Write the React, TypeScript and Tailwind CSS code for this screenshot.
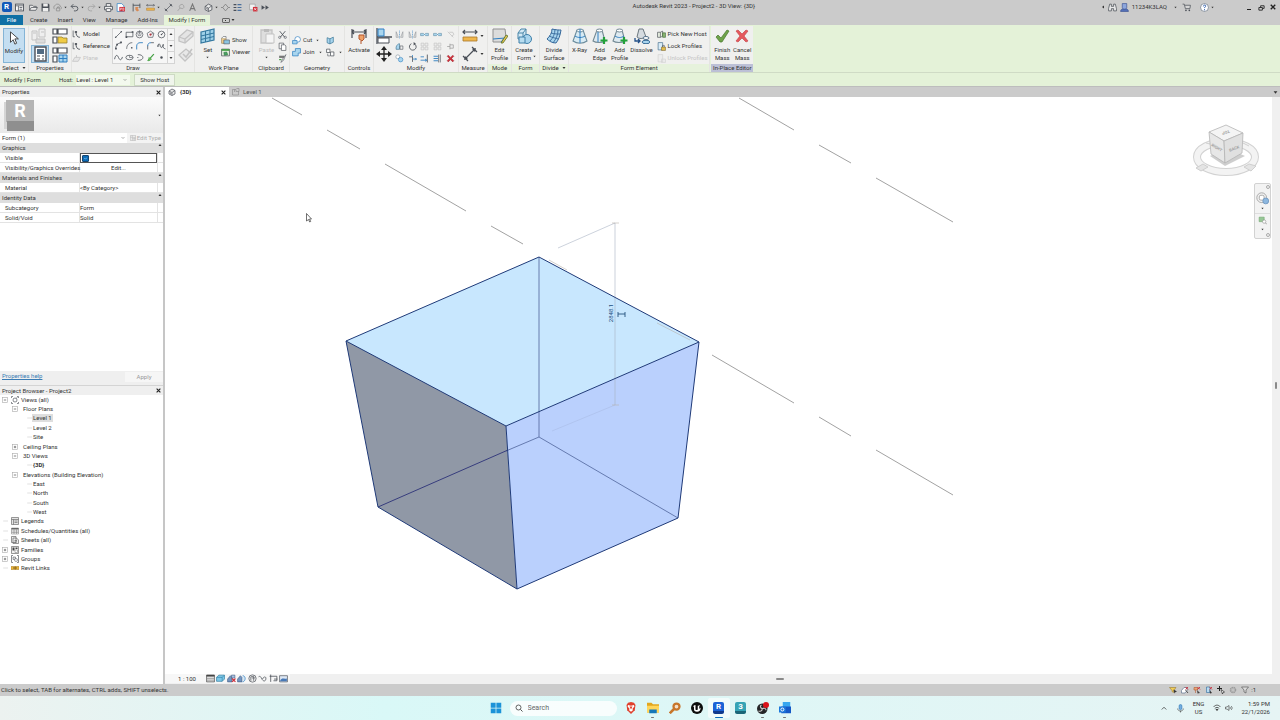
import type { ReactNode } from 'react';
import clsx from 'clsx';

const K = '#4a4f57';
const B = '#2f7fc1';
const L = '#a9d5ee';
const G = '#3f9c3f';
const R = '#cf2f3a';
const S = '#c3c3c3';

const glyphs: Record<string, ReactNode> = {
  palette: <><rect x="1" y="2" width="14" height="12" fill="#fff" stroke={K} strokeWidth="1.6" /><path d="M1 5h14M6 5v9M8 8h5M8 11h5" stroke={K} strokeWidth="1.4" /></>,
  open: <path d="M1 13V4h5l2 2h5v2M1 13l3-5h11l-3 5z" fill="#ececec" stroke={K} strokeWidth="1.3" />,
  save: <><path d="M1 1h12l2 2v12H1z" fill={K} /><path d="M4 1h8v5H4zM3 9h10v6H3z" fill="#eee" /></>,
  sync: <path d="M3 11a4 4 0 0 1 1-7 5 5 0 0 1 9 2 3 3 0 0 1 1 5M6 9h6v5H6zM8 9V7h3v2" fill="none" stroke="#8a8a8a" strokeWidth="1.3" />,
  undo: <path d="M6 2 2 6l4 4M2 6h8a4 4 0 0 1 0 8H7" fill="none" stroke={K} strokeWidth="1.5" />,
  redo: <path d="m10 2 4 4-4 4M14 6H6a4 4 0 0 0 0 8h3" fill="none" stroke="#a3a3a3" strokeWidth="1.5" />,
  print: <><path d="M4 6V1h8v5M4 12H1V6h14v6h-3" fill="#eee" stroke={K} strokeWidth="1.5" /><path d="M4 10h8v5H4z" fill="#fff" stroke={K} strokeWidth="1.4" /></>,
  pdf: <><path d="M2 1h8l4 4v10H2z" fill="#fff" stroke={B} strokeWidth="1.3" /><path d="M6 7h10v8H6z" fill={R} /><path d="M8 13V9h2v2H8M12 9v4h2V9z" stroke="#fff" strokeWidth=".8" fill="none" /></>,
  gauge: <><path d="M2 1v14M14 1v8M2 4h12" stroke={K} strokeWidth="1.5" fill="none" /><path d="M6 7h6l-2 3 3 3-4 2-3-3z" fill="#d98a55" /></>,
  ruler: <><path d="M1 4h14M3 2 1 4l2 2M13 2l2 2-2 2" fill="none" stroke={K} strokeWidth="1.2" /><path d="M1 9h14v4H1z" fill="#efb64c" stroke="#a9772a" strokeWidth=".8" /></>,
  dimension: <><path d="M3 13 13 3M1 10l5 5M10 1l5 5" stroke={K} strokeWidth="1.2" /><path d="m2 14 1-4 3 3zM14 2l-1 4-3-3z" fill={K} /></>,
  tag: <path d="M3 14 7 9M7 9a4 4 0 1 1 5 1l-5-1" fill="none" stroke="#9a9a9a" strokeWidth="1.3" />,
  letter: <path d="M3 14 8 2l5 12M5 10h6" fill="none" stroke="#777" strokeWidth="2" />,
  house: <><path d="M2 6 8 2l6 3v7l-6 3-6-3z" fill="#e8e8e8" stroke={K} strokeWidth="1.4" /><path d="m2 6 6 3 6-4M8 9v6M4 10h2v2" fill="none" stroke={K} strokeWidth="1.2" /></>,
  section: <path d="m8 2 5 6-5 6-5-6zM0 8h3M13 8h3" fill="none" stroke="#777" strokeWidth="1.3" />,
  thin: <><path d="M1 3h5M1 8h5M1 13h5" stroke={K} strokeWidth="2.2" /><path d="M8 3h7M8 8h7M8 13h7" stroke="#4a6f9c" strokeWidth="2.2" /></>,
  closewin: <><path d="M1 2h10v10H1z" fill="#f2f2f2" stroke="#999" strokeWidth="1.2" /><path d="M7 7h8v8H7z" fill={R} /><path d="m9 9 4 4M13 9l-4 4" stroke="#fff" strokeWidth="1.2" /></>,
  more: <path d="M1 4v8l6-4zM8 4v8l6-4z" fill={K} />,
  cursor: <path d="M4 1v12l3-3 2 5 2-1-2-5h4z" fill="#fff" stroke="#333" strokeWidth="1" />,
  typeProps: <><path d="M1 3h5v9H1zM8 1h6v8H8z" fill="#eee" stroke={S} /><path d="M2 5h3M10 4h3M5 11h9v4H5z" stroke={S} fill="#ddd" /></>,
  family: <><path d="M1 1h4v5H1zM6 1h9v5H6zM1 9h4v6H1z" fill="#fff" stroke={K} strokeWidth="1.2" /><path d="M6 9h4l1 1h4v5H6z" fill="#f0cb45" stroke="#97812f" strokeWidth=".8" /></>,
  propSheet: <><path d="M3 1h11v14H3z" fill="#fff" stroke={K} strokeWidth="1.4" /><path d="M5 3h7v5H5z" fill="#526b83" /><path d="M5 10h3M10 10h2M5 13h3M10 13h2" stroke={K} strokeWidth="1.2" /></>,
  familyTypes: <><path d="M1 1h4v5H1zM6 1h9v5H6zM1 9h4v6H1z" fill="#fff" stroke={K} strokeWidth="1.2" /><path d="M7 8h8v7H7z" fill={L} stroke={B} /><path d="M7 11.500h8M11 8v7" stroke={B} /></>,
  modelLine: <><path d="M2 1v11M2 12h3" fill="none" stroke={K} strokeWidth="1.3" /><path d="M7 3c0 6 2 10 7 10" fill="none" stroke={K} strokeWidth="1.6" /><path d="M5 2h4v3H5z" fill={K} /></>,
  plane: <path d="m1 13 4-7h10l-4 7zM8 6V2" fill="#e6e6e6" stroke={S} strokeWidth="1.4" />,
  line: <><path d="M3 13 13 3" stroke={K} strokeWidth="1.3" /><circle cx="3" cy="13" r="1.400" fill={K} /><circle cx="13" cy="3" r="1.400" fill={K} /></>,
  rect: <><path d="M2 4h12v8H2z" fill="none" stroke={K} strokeWidth="1.3" /><path d="M1 11h3v3H1zM12 2h3v3h-3z" fill={K} /></>,
  polyIn: <><circle cx="8" cy="8" r="6" fill="none" stroke={K} strokeWidth="1.2" /><path d="M8 8V1M5 6l3-3 3 3-1 4H6z" fill="none" stroke={K} /></>,
  polyOut: <><path d="m8 2 6 4-2 7H4L2 6z" fill="none" stroke={K} strokeWidth="1.2" /><circle cx="8" cy="8" r="2" fill={R} /><path d="m8 8 5-2" stroke={K} /></>,
  circle: <><circle cx="8" cy="8" r="6" fill="none" stroke={K} strokeWidth="1.3" /><path d="m8 8 4-4" stroke={K} strokeWidth="1.2" /><circle cx="8" cy="8" r="1.400" fill={K} /></>,
  arc: <><path d="M3 14C3 8 6 4 13 3" fill="none" stroke={K} strokeWidth="1.4" /><path d="M2 12h3v3H2zM11 1h3v3h-3zM4 5h3v3H4z" fill={K} /></>,
  arcCenter: <><path d="M3 14C3 7 7 3 13 3" fill="none" stroke={K} strokeWidth="1.3" /><circle cx="12" cy="12" r="1.500" fill={K} /></>,
  arcTan: <path d="M3 15V9c0-4 3-6 6-6h5" fill="none" stroke={B} strokeWidth="1.600" />,
  fillet: <><path d="M3 15V8" stroke={K} strokeWidth="1.4" /><path d="M3 9c0-4 2-6 6-6" fill="none" stroke={B} strokeWidth="1.600" /><path d="M9 3h5" stroke={K} strokeWidth="1.4" /></>,
  spline: <path d="M1 10c3-10 4-3 6 1s5-9 4-4 1 6 4 7M1 9h3" fill="none" stroke={K} strokeWidth="1.500" />,
  wave: <path d="M1 11C3 2 6 3 8 8s5 6 7-1" fill="none" stroke={K} strokeWidth="1.500" />,
  ellipse: <><ellipse cx="8" cy="8" rx="6.500" ry="4" fill="none" stroke={K} strokeWidth="1.3" /><path d="M8 4v4h6" fill="none" stroke={K} /></>,
  halfEllipse: <path d="M5 3c12-1 12 11 0 10M4 8h2" fill="none" stroke={K} strokeWidth="1.4" />,
  pick: <><path d="M3 14 14 2" stroke={G} strokeWidth="2" /><path d="M5 8v6l5-3z" fill="#7acb5d" stroke={G} /></>,
  point: <circle cx="8" cy="8" r="2.200" fill={K} />,
  drawFace: <><path d="m1 9 8-7 6 2v4l-8 7-6-2z" fill="#e4e4e4" stroke={S} strokeWidth="1.3" /><path d="m1 9 6 2 8-7M7 11v4" fill="none" stroke={S} strokeWidth="1.3" /></>,
  drawPlane: <><path d="m1 9 7-6 6 5-7 7z" fill="#e8e8e8" stroke={S} strokeWidth="1.3" /><path d="m5 8 3 3 6-8" fill="none" stroke={S} strokeWidth="1.600" /></>,
  workPlane: <><path d="m1 4 13-3v11L1 15z" fill="#9fd0e8" stroke="#33779f" strokeWidth="1.2" /><path d="M5.500 3v11M10 2v11M1 8l13-3M1 11.500 14 8.500" stroke="#33779f" /></>,
  show: <><path d="M1 4h8v9H1z" fill="#f3cf8c" stroke="#8b744a" /><path d="M5 7h10v7H5z" fill="#8cc4e0" stroke={K} /><path d="M1 4 4 1h5L9 4" fill="#fff" stroke={K} /></>,
  viewer: <><path d="M1 2h14v12H1z" fill="#e5f2df" stroke={K} strokeWidth="1.3" /><path d="M1 2h14v3H1z" fill={G} /><path d="m5 8 5-1 2 5-6 1z" fill="#4aa563" stroke="#286b3d" /></>,
  paste: <><path d="M2 2h11v13H2z" fill="#dedede" stroke={S} strokeWidth="1.3" /><path d="M5 1h5v3H5z" fill="#bbb" /><path d="M7 6h8v9H7z" fill="#f5f5f5" stroke={S} /></>,
  cutClip: <><path d="m3 2 9 11M13 2 4 13" stroke={K} strokeWidth="1.500" /><circle cx="3" cy="13" r="2" fill="none" stroke={K} /><circle cx="13" cy="13" r="2" fill="none" stroke={K} /></>,
  copyClip: <><path d="M2 2h8v10H2z" fill="#fff" stroke={K} strokeWidth="1.2" /><path d="M6 5h6l2 2v8H6z" fill="#fff" stroke={K} strokeWidth="1.2" /></>,
  match: <><path d="M2 3h9v4H2z" fill="#777" /><path d="M14 1 8 9l-3 6 5-4z" fill="#e8e8e8" stroke={K} /><path d="M2 10h4" stroke={G} strokeWidth="2" /></>,
  cutGeom: <><circle cx="10" cy="6" r="5" fill="#fff" stroke={B} strokeWidth="1.2" /><path d="M1 8h8v6H1z" fill={L} stroke={B} strokeWidth="1.2" /></>,
  joinGeom: <path d="M6 1h9v8h-4v5H1V6h5z" fill={L} stroke={B} strokeWidth="1.3" />,
  cope: <path d="m2 3 5 2 6-3v9l-6 3-5-2zM7 5v9" fill={L} stroke="#3d7797" strokeWidth="1.3" />,
  wallJoin: <><path d="M1 2h6v6H1zM8 7h6v7H8z" fill="#fff" stroke={K} strokeWidth="1.3" /><path d="M3 10v4h4" fill="none" stroke={K} /></>,
  activate: <><path d="M1 1v9M15 1v9M1 4h14M3 2 1 4l2 2M13 2l2 2-2 2" stroke={K} strokeWidth="1.2" fill="none" /><path d="M8 7h5v4l-2 2-3-2zM10 13v3" fill="#f0a36a" stroke="#b4572c" /></>,
  align: <><path d="M1 0v16M1 9h15" stroke={K} strokeWidth="1.3" /><path d="M2 1h6v7H2z" fill={L} stroke={B} /><path d="M2 10h11v5H2z" fill="#fff" stroke={K} /></>,
  move: <><path d="M8 2v12M2 8h12" stroke="#222" strokeWidth="1.300" /><path d="m8 0 3 4H5zM8 16l3-4H5zM0 8l4-3v6zM16 8l-4-3v6z" fill="#222" /></>,
  mirror: <><path d="M8 1v14" stroke={B} strokeDasharray="2 1" /><path d="M2 13V3l4 10zM14 13V3l-4 10z" fill="#e8e8e8" stroke="#8b8f94" /></>,
  split: <path d="M1 6h5l2 2-2 2H1zM15 6h-5L8 8l2 2h5z" fill={L} stroke="#5b87a3" />,
  unpin: <path d="m3 3 10 10M6 4h6l2 4-4 3" fill="none" stroke={S} strokeWidth="1.4" />,
  offset: <><path d="M2 13V9c2-6 6-6 6-6v10z" fill={L} stroke="#4d7f9c" strokeWidth="1.3" /><path d="M9 7h5v6H9z" fill="#eee" stroke={K} /></>,
  rotate: <><path d="M6 3a6 6 0 1 0 5 0" fill="none" stroke={K} strokeWidth="1.500" /><path d="M10 0v6l4-3z" fill={K} /></>,
  array: <path d="M2 2h5v5H2zM9 2h5v5H9zM2 9h5v5H2zM9 9h5v5H9z" fill="#ececec" stroke={S} strokeWidth="1.2" />,
  pin: <path d="M2 8h5M7 3v10M7 5h6v6H7" fill="#eee" stroke="#9b9b9b" strokeWidth="1.3" />,
  copyEl: <><circle cx="5" cy="5" r="3.500" fill="#fff" stroke="#7b8a95" /><circle cx="10" cy="10" r="4" fill={L} stroke={B} /></>,
  trim: <><path d="M2 5h6v9" fill="none" stroke={K} strokeWidth="1.400" /><path d="M8 2v3M9 9h6m-2-2 2 2-2 2" fill="none" stroke={B} strokeWidth="1.500" /></>,
  extend: <><path d="M13 1v14" stroke={K} strokeWidth="1.500" /><path d="M1 5h6M1 11h11m-3-2 3 2-3 2" fill="none" stroke={B} strokeWidth="1.500" /></>,
  extendMany: <><path d="M13 1v14M10 1v14" stroke={K} strokeWidth="1.200" /><path d="M1 4h8M1 8h8M1 12h8" stroke={B} strokeWidth="1.600" /></>,
  del: <path d="m2 4 2-2 4 4 4-4 2 2-4 4 4 4-2 2-4-4-4 4-2-2 4-4z" fill={R} stroke="#8f1d27" strokeWidth=".7" />,
  editProfile: <><path d="M1 1h12l1 8-4 5H1z" fill="#dcdcdc" stroke="#909090" /><path d="m1 11 12-1M9 14l5-6" stroke={B} /><path d="m9 15 5-8 2 1-5 7z" fill="#e9c44f" stroke="#55702a" strokeWidth=".8" /></>,
  createForm: <><path d="M2 5 5 1h5v7l-3 3H2z" fill="#d3e9f5" stroke="#4a86a8" /><path d="M2 5h5l3-4M7 5v6" fill="none" stroke="#4a86a8" /><circle cx="11" cy="11" r="4.500" fill={L} stroke="#3e7fa8" /><path d="M3 9h6v6H3z" fill="#b7ddf0" stroke="#3e7fa8" /></>,
  divide: <><path d="M6 1c4 1 7 1 9 1-1 6-2 9-5 13-4 0-7-2-9-4 3-3 5-6 5-10z" fill={L} stroke="#36689a" /><path d="M5 5c4 1 6 1 9 1M3 8c4 2 7 2 9 3M9 1c0 5-2 9-5 12M12 2c0 5-2 9-5 13" fill="none" stroke="#36689a" strokeWidth=".9" /></>,
  xray: <><path d="M5 2h6l4 11c-4 3-10 3-14 0z" fill="#d9ebf3" stroke="#6d8d9d" strokeWidth="1.1" /><ellipse cx="8" cy="2.500" rx="3" ry="1.500" fill="#fff" stroke="#6d8d9d" /><path d="M8 1v14M3 8c3 2 7 2 10 0" fill="none" stroke={B} /></>,
  addEdge: <><path d="M5 2h5l3 11c-3 2-9 2-12 0z" fill="#dfeaf0" stroke="#738994" strokeWidth="1.1" /><ellipse cx="7.500" cy="2.500" rx="3" ry="1.500" fill="#fff" stroke="#738994" /><path d="M6 4v10" stroke={B} /><path d="M12 9v7M8.500 12.500h7" stroke="#22a03a" strokeWidth="2.200" /></>,
  addProfile: <><path d="M5 2h5l3 11c-3 2-9 2-12 0z" fill="#dfeaf0" stroke="#738994" strokeWidth="1.1" /><ellipse cx="7.500" cy="2.500" rx="3" ry="1.500" fill="#fff" stroke="#738994" /><path d="M3 8c3 2 6 2 9 0" fill="none" stroke={B} /><path d="M12 9v7M8.500 12.500h7" stroke="#22a03a" strokeWidth="2.200" /></>,
  dissolve: <><path d="M5 1h4l3 8c-3 2-7 2-9 0z" fill="#d5dbe0" stroke="#6c7880" /><ellipse cx="12" cy="10" rx="3" ry="1.500" fill="#fff" stroke="#56728c" /><ellipse cx="12" cy="14" rx="4" ry="1.700" fill={L} stroke="#3a6e99" /><path d="M1 10v3h5m-2-2 2 2-2 2" fill="none" stroke="#234f87" strokeWidth="1.300" /></>,
  pickHost: <><path d="M1 4h5v9H1zM6 4l4-2v9l-4 2" fill="#e8f0e2" stroke={K} strokeWidth="1.2" /><path d="M10 5h5v8h-5z" fill="#8cb873" stroke="#355c2c" /></>,
  lock: <><path d="M2 1h8v13H2z" fill="#d9ecf7" stroke="#48708e" strokeWidth="1.2" /><path d="M8 9h7v6H8z" fill="#e5be4c" stroke="#7c6429" /><path d="M10 9V6h3v3" fill="none" stroke={K} /></>,
  unlock: <path d="M2 1h8v13H2zM8 9h7v6H8z" fill="#ededed" stroke="#d3d3d3" strokeWidth="1.2" />,
  finish: <path d="m2 9 2-2 3 3 6-8 2 1-7 11H6z" fill="#6fa34a" stroke="#48752e" strokeWidth=".7" />,
  cancel: <path d="m2 3 2-1 4 4 4-4 2 1-4 5 4 5-2 1-4-4-4 4-2-1 4-5z" fill="#e5585d" stroke="#c94a50" strokeWidth=".7" />,
  binoc: <path d="M3 2h3v4h4V2h3l2 8v4h-5v-4H6v4H1v-4z" fill="#e8e8e8" stroke={K} strokeWidth="1.3" />,
  user: <><path d="M1 15c0-4 3-5 7-5s7 1 7 5z" fill="#5672b9" stroke="#2b4387" /><path d="M4 1h8v7l-2 3H6L4 8z" fill="#8da6dc" stroke="#2b4387" /></>,
  cart: <><path d="M1 2h3l2 8h8l1-6H5" fill="#d6d6d6" stroke={K} strokeWidth="1.3" /><circle cx="7" cy="13" r="1.500" fill={K} /><circle cx="13" cy="13" r="1.500" fill={K} /></>,
  help: <><circle cx="8" cy="8" r="7" fill="#fff" stroke="#4b596d" /><path d="M6 6c0-3 5-3 4 0 0 1-2 1-2 3M8 11v2" fill="none" stroke="#2456a8" strokeWidth="1.700" /></>,
  plan: <path d="M1 3h7v4h6V1H9M1 3v11h12V7M5 3v5" fill="none" stroke="#8c8c8c" strokeWidth="1.300" />,
  editType: <path d="M1 1h14v14H1zM1 6h14M6 1v14M6 10h9M11 6v9" fill="none" stroke="#b3b3b3" strokeWidth="1.500" />,
  views: <><path d="M4 1H1v3M12 1h3v3M4 15H1v-3M12 15h3v-3" fill="none" stroke={K} strokeWidth="1.3" /><circle cx="8" cy="8" r="4" fill="none" stroke={K} strokeWidth="1.3" /><path d="m10 5 3-3" stroke={K} /></>,
  legend: <path d="M1 1h14v14H1zM1 5h14M5 5v10M7 8h6M7 11h6" fill="#e4e4e4" stroke="#666" strokeWidth="1.3" />,
  schedule: <><path d="M1 2h14v12H1zM1 8h14M1 11h14M6 5v9M11 5v9" fill="#fafafa" stroke="#777" /><path d="M1 3.500h14" stroke="#666" strokeWidth="3" /></>,
  sheet: <path d="M1 1h9v12H1zM4 4h7l4 4v7H4zM7 9h5M7 12h5" fill="#eee" stroke="#555" strokeWidth="1.2" />,
  families: <><path d="M1 1h14v14H1z" fill="#f0f0f0" stroke="#555" strokeWidth="1.2" /><path d="M3 3h4v6H3zM9 3h4v3H9z" fill="#444" /><path d="M8 8h5v5H8z" fill="#fff" stroke="#777" /></>,
  groups: <><path d="M4 1H1v14h3M12 1h3v14h-3" fill="none" stroke={K} strokeWidth="1.3" /><path d="M4 4h5v5H4z" fill="#ddd" stroke={K} /><circle cx="10" cy="10" r="3" fill="#fff" stroke={K} /></>,
  link: <><path d="M0 5h9v6H0zM8 5h8v6H8z" fill="#eab73d" stroke="#a4761e" /><path d="M4 8h8" stroke="#6a4b10" strokeWidth="1.600" /></>,
  detail: <><path d="M1 2h14v12H1z" fill="#ddd" stroke="#444" strokeWidth="1.2" /><path d="M1 3h14" stroke="#444" strokeWidth="3" /><path d="M1 8h14M1 11h14" stroke="#888" /></>,
  style: <><path d="M1 6 5 2h10v7l-4 4H1z" fill="#7fc8e8" stroke="#277aa0" strokeWidth="1.2" /><path d="M1 6h10l4-4M11 6v7" fill="none" stroke="#277aa0" /></>,
  sun: <><path d="M1 9 6 3l3 3v8H1z" fill="#7596c0" stroke="#38547c" /><path d="M8 2h6v5H8z" fill="#a9c1e0" stroke="#38547c" /><path d="m9 8 6 6M15 8l-6 6" stroke={R} strokeWidth="2" /></>,
  shadow: <><path d="M1 9 6 3l3 3v8H1z" fill="#7596c0" stroke="#38547c" /><path d="M10 3c6 0 6 10 0 11" fill="#d8e8f5" stroke={B} strokeWidth="1.300" /></>,
  crop: <><circle cx="8" cy="8" r="6.500" fill="#eee" stroke={K} strokeWidth="1.2" /><path d="M5 12V5l5-1v8M7 7h6" fill="none" stroke={K} strokeWidth="1.200" /></>,
  glasses: <path d="M1 5c3-2 4 0 6 4s6 5 7 0-4-5-6 0" fill="none" stroke={K} strokeWidth="1.300" />,
  reveal: <path d="M3 1v13M1 4h13v8M9 9h6M8 12h6" fill="none" stroke={K} strokeWidth="1.400" />,
  analytic: <><path d="M1 3h14v11H1z" fill="#dfe9f5" stroke={K} strokeWidth="1.2" /><path d="M2 12c4-7 6-2 12-4v5H2z" fill="#4879b7" /></>,
  wrench: <><path d="M1 3h13l-5 7v3l-3-2v-2z" fill="#f1cd58" stroke="#8d6d1c" /><path d="m9 7 2 8 2-3 3-1z" fill="#333" /></>,
  selLink: <><path d="M1 9 6 3h6v6l-4 5H1z" fill="#fff" stroke="#4d6484" strokeWidth="1.2" /><path d="m9 2 5 5M14 2 9 7" stroke={R} strokeWidth="1.800" /><path d="m9 8 5 6" stroke="#333" strokeWidth="1.600" /></>,
  selPin: <><path d="M2 3h7v5H2zM5 8v6" fill="#e8a67a" stroke="#b35a30" strokeWidth="1.200" /><path d="m9 2 5 5M14 2 9 7" stroke={R} strokeWidth="1.800" /><path d="m8 8 6 6-5 1z" fill="#444" /></>,
  selFace: <><path d="M3 2h7v11H3z" fill="#b9dcf1" stroke="#2a68a0" strokeWidth="1.2" /><path d="m9 2 5 5M14 2 9 7" stroke={R} strokeWidth="1.800" /><path d="m9 8 5 6-4 1z" fill="#333" /></>,
  drag: <><path d="M5 0v10M0 5h10" stroke="#222" strokeWidth="2" /><path d="m8 7 7 5-3 1-1 3z" fill="#fff" stroke="#222" strokeWidth="1.300" /></>,
  gear: <circle cx="8" cy="8" r="5" fill="#c2c2c2" stroke="#9b9b9b" strokeWidth="3" strokeDasharray="3 1" />,
  funnel: <path d="M1 2h14l-5 6v6l-4-2V8z" fill="#ddd" stroke="#555" strokeWidth="1.300" />,
  wheel: <><circle cx="7" cy="7" r="6" fill="#f3f3f3" stroke="#9a9a9a" /><rect x="4" y="4" width="6" height="6" rx="2" fill="#fff" stroke="#999" /><circle cx="12" cy="11" r="3.600" fill="#8db7df" stroke="#6c94bd" /></>,
  zoomRegion: <><path d="M2 2h9v8H2z" fill="#97c796" stroke="#6ea46d" /><circle cx="11" cy="10" r="3" fill="#fff" stroke="#8d8d8d" /><path d="m13 12 3 3" stroke="#8d8d8d" strokeWidth="1.400" /></>,
  windows: <path d="M1 1h6.500v6.500H1zM8.500 1H15v6.500H8.500zM1 8.500h6.500V15H1zM8.500 8.500H15V15H8.500z" fill="#1c93d8" />,
  search: <><circle cx="7" cy="7" r="5" fill="none" stroke="#333" strokeWidth="1.500" /><path d="m11 11 4 4" stroke="#333" strokeWidth="1.700" /></>,
  brave: <><path d="m4 1 4-1 4 1 2 3-1 7-5 5-5-5-1-7z" fill="#e0402d" /><path d="m4 4 4 1 4-1 .5 2L10 9l.5 2L8 13l-2.500-2L6 9 3.500 6z" fill="#fff" /><path d="m6 6 2 4 2-4z" fill="#e0402d" /></>,
  folder: <><path d="M0 1h6l2 2h8v11H0z" fill="#e2a61f" /><path d="M0 5h16v9H0z" fill="#ffd65b" /><path d="M3 10h10v5H3z" fill="#1577b8" /></>,
  finder: <><circle cx="10" cy="6" r="4" fill="#f4dfc8" stroke="#c8762b" strokeWidth="3" /><path d="m7 9-6 6" stroke="#c8762b" strokeWidth="3.500" /></>,
  unreal: <><circle cx="8" cy="8" r="8" fill="#0d0d0d" /><path d="M3 7c0-2 1-3 3-3v6c1 1 2 1 3 0V5c1 0 2-1 3-1-1 1-1 2-1 5 1 0 2-1 2-2 0 4-2 6-5 6-2 0-4-1-4-3V6z" fill="#fff" /></>,
  obs: <><circle cx="7" cy="9" r="7" fill="#252527" /><path d="M7 9c-3-1-3-4-1-5M7 9c3-2 5 0 5 2M7 9c0 3-3 4-5 3" fill="none" stroke="#c9c9c9" strokeWidth="1.500" /><circle cx="12" cy="4" r="4" fill="#d9131a" /></>,
  outlook: <><path d="M5 0h10v7H5z" fill="#37a7ef" /><path d="M3 6h13v9H3z" fill="#1459c7" /><path d="M0 6h9v8H0z" fill="#1b78dc" /><circle cx="4.500" cy="10" r="2" fill="none" stroke="#fff" strokeWidth="1.300" /></>,
  mic: <><rect x="5.500" y="1" width="5" height="9" rx="2.500" fill="#74aee0" stroke="#2872b4" /><path d="M3 8c0 6 10 6 10 0M8 12v3" fill="none" stroke="#444" strokeWidth="1.200" /></>,
  wifi: <><path d="M1 6c4-5 10-5 14 0M3.500 9c3-3 6-3 9 0" fill="none" stroke="#444" strokeWidth="1.600" /><path d="M5 11c2-2 4-2 6 0l-3 3z" fill="#444" /></>,
  volume: <path d="M1 6h3l4-3v10l-4-3H1zM10 6c1 1 1 3 0 4M12 4c3 2 3 6 0 8" fill="none" stroke="#444" strokeWidth="1.300" />,
};

function Icon({ name, className = 'size-4' }: { name: string; className?: string }) {
  return (
    <svg viewBox="0 0 16 16" className={clsx('shrink-0', className)} fill="none" aria-hidden="true">
      {glyphs[name]}
    </svg>
  );
}

function Caret({ className = 'size-1' }: { className?: string }) {
  return (
    <svg viewBox="0 0 8 8" className={clsx('shrink-0', className)} aria-hidden="true">
      <path d="M1 2h6L4 6z" fill="#333" />
    </svg>
  );
}

function Cross({ className = 'size-[5px]' }: { className?: string }) {
  return (
    <svg viewBox="0 0 8 8" className={clsx('shrink-0', className)} aria-hidden="true">
      <path d="m1 1 6 6M7 1 1 7" stroke="#222" strokeWidth="1.8" />
    </svg>
  );
}

function AppBadge({ letter, className }: { letter: string; className: string }) {
  return (
    <span className={clsx('flex flex-col items-center rounded-[2px] font-bold text-white', className)}>
      {letter}
    </span>
  );
}

function QuickButton({ icon, className }: { icon: string; className?: string }) {
  return (
    <button aria-label={icon} className={clsx('flex w-3 shrink-0 justify-center', className)}>
      <Icon name={icon} className="size-[9px]" />
    </button>
  );
}

function QuickCaret() {
  return (
    <button aria-label="More options" className="flex w-[5px] shrink-0 justify-center">
      <Caret className="size-[3px]" />
    </button>
  );
}

function TitleBar() {
  return (
    <header className="flex h-[14px] items-center bg-[#cbcbcb]">
      <button aria-label="Revit" className="flex w-[13px] justify-center">
        <AppBadge letter="R" className="size-[10px] bg-[#1459b8] text-[8px] leading-[10px]" />
      </button>
      <QuickButton icon="palette" className="mr-[2px]" />
      <QuickButton icon="open" />
      <QuickButton icon="save" />
      <QuickButton icon="sync" />
      <QuickCaret />
      <QuickButton icon="undo" />
      <QuickCaret />
      <QuickButton icon="redo" />
      <QuickCaret />
      <QuickButton icon="print" />
      <QuickButton icon="pdf" className="mr-1" />
      <QuickButton icon="gauge" className="mr-[2px]" />
      <QuickButton icon="ruler" />
      <QuickCaret />
      <QuickButton icon="dimension" className="ml-px" />
      <QuickButton icon="tag" />
      <QuickButton icon="letter" className="mr-1" />
      <QuickButton icon="house" />
      <QuickCaret />
      <QuickButton icon="section" />
      <QuickButton icon="thin" className="mr-1" />
      <QuickButton icon="closewin" />
      <QuickButton icon="more" />
      <h1 className="flex-1 pb-[3px] pl-4 text-center">Autodesk Revit 2023 - Project2 - 3D View: {'{3D}'}</h1>
      <div className="flex items-center">
        <Caret className="mr-[2px] size-1 rotate-90" />
        <QuickButton icon="binoc" />
        <QuickButton icon="user" />
        <button className="pl-px">11234K3LAQ</button>
        <span className="w-[6px]" />
        <QuickCaret />
        <QuickButton icon="cart" className="ml-[2px]" />
        <QuickButton icon="help" className="ml-[6px]" />
        <QuickCaret />
      </div>
      <div className="ml-7 flex items-center">
        <button aria-label="Minimize" className="flex w-3 justify-center pt-1">
          <span className="h-px w-1 bg-[#222]" />
        </button>
        <button aria-label="Restore" className="flex w-3 justify-center">
          <svg viewBox="0 0 8 8" className="size-[7px]" fill="none">
            <path d="M1 4h4v3H1zM3 4V2h4v3H5" stroke="#222" />
          </svg>
        </button>
        <button aria-label="Close" className="mr-px flex w-3 justify-center">
          <Cross className="size-[6px]" />
        </button>
      </div>
    </header>
  );
}

const tabs = ['Create', 'Insert', 'View', 'Manage', 'Add-Ins'];

function TabRow() {
  return (
    <nav className="flex h-[11px] items-stretch bg-[#cbcbcb] pt-px">
      <button className="mr-[2px] w-[23px] bg-[#0f70a5] text-white">File</button>
      {tabs.map((tab) => (
        <button key={tab} className="px-[5px]">{tab}</button>
      ))}
      <button className="ml-px w-[46px] bg-[#e6f3da]">Modify | Form</button>
      <button aria-label="Ribbon display" className="ml-3 flex items-center gap-px">
        <span className="flex h-[5px] w-2 items-center justify-center rounded-[1px] border border-[#666]">
          <span className="size-px bg-[#333]" />
        </span>
        <Caret />
      </button>
    </nav>
  );
}

function Panel({ title, className, green, children }: { title: ReactNode; className: string; green?: boolean; children: ReactNode }) {
  return (
    <section className={clsx('flex shrink-0 flex-col border-r border-[#e4e4e2] bg-[#f0f0ef]', className)}>
      <div className="flex flex-1 items-start justify-center pt-[2px]">{children}</div>
      <h2 className={clsx('flex h-2 items-center justify-center gap-[3px] whitespace-nowrap', green && 'bg-[#e6f2dc]')}>{title}</h2>
    </section>
  );
}

function BigButton({ icon, label, caret, muted, className }: { icon: string; label: string; caret?: boolean; muted?: boolean; className?: string }) {
  return (
    <button className={clsx('flex shrink-0 flex-col items-center', muted && 'text-[#bcbcbc]', className)}>
      <Icon name={icon} className="mb-[2px] size-4" />
      <span className="whitespace-pre-line leading-2">{label}</span>
      {caret && <Caret className="mt-[2px] size-[3px]" />}
    </button>
  );
}

function RowButton({ icon, label, caret, muted }: { icon: string; label?: string; caret?: boolean; muted?: boolean }) {
  return (
    <button aria-label={label ?? icon} className={clsx('flex h-3 items-center gap-[2px] whitespace-nowrap', muted && 'text-[#c4c4c4]')}>
      <Icon name={icon} className="size-[9px]" />
      {label}
      {caret && <Caret className="ml-[2px] size-[3px]" />}
    </button>
  );
}

const drawTools = [
  'line', 'rect', 'polyIn', 'polyOut', 'circle',
  'arc', 'arcCenter', 'arcTan', 'fillet', 'spline',
  'wave', 'ellipse', 'halfEllipse', 'pick', 'point',
];

const modifyTools = [
  'mirror', 'mirror', 'split', 'split', 'unpin',
  'offset', 'rotate', 'array', 'array', 'pin',
  'copyEl', 'trim', 'extend', 'extendMany', 'del',
];

function ToolGrid({ tools, className }: { tools: string[]; className: string }) {
  return (
    <div className={clsx('grid grid-cols-5', className)}>
      {tools.map((tool, i) => (
        <button key={i} aria-label={tool} className="flex items-center justify-center">
          <Icon name={tool} className="size-[9px]" />
        </button>
      ))}
    </div>
  );
}

function Ribbon() {
  return (
    <div className="flex h-[48px] border-b border-[#cfdbc5] bg-[#e4f2d8] pt-px">
      <Panel title={<>Select <Caret /></>} className="w-[29px]">
        <button className="flex h-[35px] w-[22px] flex-col items-center border border-[#84b4d6] bg-[#c4def1] pt-[2px]">
          <Icon name="cursor" className="mb-[2px] size-[14px]" />
          <span className="leading-2">Modify</span>
        </button>
      </Panel>
      <Panel title="Properties" className="w-[43px]">
        <div className="grid grid-cols-2 gap-x-[3px] gap-y-px">
          <button aria-label="Type properties"><Icon name="typeProps" /></button>
          <button aria-label="Family category"><Icon name="family" /></button>
          <button aria-label="Properties palette" className="border border-[#84b4d6] bg-[#c4def1]"><Icon name="propSheet" /></button>
          <button aria-label="Family types" className="pt-px"><Icon name="familyTypes" /></button>
        </div>
      </Panel>
      <Panel title="Draw" className="w-[123px]">
        <div className="flex w-[39px] flex-col">
          <RowButton icon="modelLine" label="Model" />
          <RowButton icon="modelLine" label="Reference" />
          <RowButton icon="plane" label="Plane" muted />
        </div>
        <div className="ml-px flex h-9 border border-[#d4d4d4] bg-[#f6f6f6]">
          <ToolGrid tools={drawTools} className="w-[54px]" />
          <div className="flex w-[7px] flex-col divide-y divide-[#d4d4d4] border-l border-[#d4d4d4]">
            <button aria-label="Scroll up" className="flex flex-1 items-center justify-center"><Caret className="size-1 rotate-180" /></button>
            <button aria-label="Scroll down" className="flex flex-1 items-center justify-center"><Caret /></button>
            <button aria-label="Expand" className="flex flex-1 items-center justify-center"><Caret /></button>
          </div>
        </div>
        <div className="ml-[3px] flex flex-col gap-[2px]">
          <button aria-label="Draw on face"><Icon name="drawFace" /></button>
          <button aria-label="Draw on work plane"><Icon name="drawPlane" /></button>
        </div>
      </Panel>
      <Panel title="Work Plane" className="w-[58px]">
        <BigButton icon="workPlane" label="Set" caret className="w-[22px]" />
        <div className="ml-[2px] flex flex-col pt-[6px]">
          <RowButton icon="show" label="Show" />
          <RowButton icon="viewer" label="Viewer" />
        </div>
      </Panel>
      <Panel title="Clipboard" className="w-[37px]">
        <BigButton icon="paste" label="Paste" caret muted className="w-[22px]" />
        <div className="flex flex-col">
          <RowButton icon="cutClip" />
          <RowButton icon="copyClip" />
          <RowButton icon="match" />
        </div>
      </Panel>
      <Panel title="Geometry" className="w-[55px]">
        <div className="grid grid-cols-[34px_auto] pt-[6px]">
          <RowButton icon="cutGeom" label="Cut" caret />
          <RowButton icon="cope" />
          <RowButton icon="joinGeom" label="Join" caret />
          <RowButton icon="wallJoin" caret />
        </div>
      </Panel>
      <Panel title="Controls" className="w-[29px]">
        <BigButton icon="activate" label="Activate" />
      </Panel>
      <Panel title="Modify" className="w-[85px]">
        <div className="mr-[2px] flex flex-col gap-[2px]">
          <button aria-label="Align"><Icon name="align" /></button>
          <button aria-label="Move"><Icon name="move" /></button>
        </div>
        <ToolGrid tools={modifyTools} className="h-9 w-[63px]" />
      </Panel>
      <Panel title="Measure" className="w-[29px]">
        <div className="flex flex-col gap-[2px]">
          <button aria-label="Measure" className="flex items-center gap-[2px]"><Icon name="ruler" /><Caret /></button>
          <button aria-label="Aligned dimension" className="flex items-center gap-[2px]"><Icon name="dimension" /><Caret /></button>
        </div>
      </Panel>
      <Panel title="Mode" green className="w-6">
        <BigButton icon="editProfile" label={'Edit\nProfile'} />
      </Panel>
      <Panel title="Form" green className="w-[28px]">
        <BigButton icon="createForm" label={'Create\nForm'} />
        <Caret className="mt-[27px] size-[3px]" />
      </Panel>
      <Panel title={<>Divide <Caret /></>} green className="w-[29px]">
        <BigButton icon="divide" label={'Divide\nSurface'} />
      </Panel>
      <Panel title="Form Element" green className="w-[141px]">
        <BigButton icon="xray" label="X-Ray" className="w-5" />
        <BigButton icon="addEdge" label={'Add\nEdge'} className="w-5" />
        <BigButton icon="addProfile" label={'Add\nProfile'} className="w-5" />
        <BigButton icon="dissolve" label="Dissolve" className="w-6" />
        <div className="ml-[3px] flex w-[52px] flex-col">
          <RowButton icon="pickHost" label="Pick New Host" />
          <RowButton icon="lock" label="Lock Profiles" />
          <RowButton icon="unlock" label="Unlock Profiles" muted />
        </div>
      </Panel>
      <section className="ml-px flex shrink-0 flex-col bg-[#f0f0ef]">
        <div className="flex flex-1 justify-center pt-[2px]">
          <BigButton icon="finish" label={'Finish\nMass'} className="w-5" />
          <BigButton icon="cancel" label={'Cancel\nMass'} className="w-5" />
        </div>
        <h2 className="h-2 bg-[#bcc0d6] px-[2px] leading-2">In-Place Editor</h2>
      </section>
    </div>
  );
}

function OptionsBar() {
  return (
    <div className="flex h-[13px] items-center bg-[#e4f2d8]">
      <span className="w-[59px] pl-1">Modify | Form</span>
      <label className="flex items-center gap-[3px]">
        Host:
        <span className="relative flex items-center bg-[#f3f9ee]">
          <select className="h-[10px] w-[54px] appearance-none bg-transparent">
            <option>Level : Level 1</option>
          </select>
          <svg viewBox="0 0 8 8" className="pointer-events-none absolute right-[3px] size-1" fill="none"><path d="m1 2 3 3 3-3" stroke="#666" /></svg>
        </span>
      </label>
      <button className="ml-1 h-3 border border-[#cddac3] bg-[#f0f5ec] px-[5px]">Show Host</button>
    </div>
  );
}

function SectionRow({ title }: { title: string }) {
  return (
    <tr className="h-[10px] bg-[#dedede]">
      <th colSpan={2} className="pl-[2px] text-left font-normal">{title}</th>
      <td className="pl-px align-top"><Caret className="size-1 rotate-180" /></td>
    </tr>
  );
}

function PropRow({ name, children }: { name: string; children: ReactNode }) {
  return (
    <tr className="h-[10px] shadow-[inset_0_-1px_#e3e3e3]">
      <th className="whitespace-nowrap pl-[5px] text-left font-normal">{name}</th>
      <td className="pl-px shadow-[inset_1px_0_#e3e3e3]">{children}</td>
      <td className="shadow-[inset_1px_0_#e3e3e3]" />
    </tr>
  );
}

function Properties() {
  return (
    <section className="flex flex-1 flex-col bg-white">
      <div className="flex h-[10px] items-center justify-between bg-[#efefef] pl-[2px] pr-[2px]">
        <h2>Properties</h2>
        <button aria-label="Close properties"><Cross /></button>
      </div>
      <div className="flex h-9 items-center justify-between bg-linear-to-b from-[#fbfbfb] to-[#e9e9e9] px-[2px]">
        <svg viewBox="0 0 32 32" className="ml-[2px] size-8" aria-hidden="true">
          <path d="M0 3h4v27H0z" fill="#d5d5d5" />
          <path d="M2 1h28v22H2z" fill="#b4b4b4" />
          <path d="M3 22h27v10H3z" fill="#8f8f8f" />
          <text x="16" y="18" textAnchor="middle" className="fill-white text-[18px] font-bold">R</text>
        </svg>
        <Caret className="size-[3px]" />
      </div>
      <div className="flex h-[10px] items-center justify-between bg-[#f3f3f3]">
        <span className="relative flex items-center bg-white">
          <select aria-label="Element filter" className="h-[10px] w-[127px] appearance-none bg-transparent pl-[2px]">
            <option>Form (1)</option>
          </select>
          <svg viewBox="0 0 8 8" className="pointer-events-none absolute right-[2px] size-1" fill="none"><path d="m1 2 3 3 3-3" stroke="#666" /></svg>
        </span>
        <button className="flex items-center gap-px pr-[2px] text-[#adadad]">
          <Icon name="editType" className="size-[6px]" />
          Edit Type
        </button>
      </div>
      <table className="w-full table-fixed border-separate border-spacing-0">
        <colgroup>
          <col className="w-[79px]" />
          <col />
          <col className="w-[6px]" />
        </colgroup>
        <tbody>
          <SectionRow title="Graphics" />
          <PropRow name="Visible">
            <label className="relative flex h-[10px] items-center border border-[#555] pl-px">
              <input type="checkbox" defaultChecked aria-label="Visible" className="size-[7px] appearance-none rounded-[1px] border border-[#17456f] bg-[#0b6cb8]" />
              <svg viewBox="0 0 7 7" className="pointer-events-none absolute size-[7px]" fill="none"><path d="m2 3 1 1 2-1" stroke="#8ec6ee" strokeWidth=".6" /></svg>
            </label>
          </PropRow>
          <PropRow name="Visibility/Graphics Overrides">
            <button className="block w-full">Edit...</button>
          </PropRow>
          <SectionRow title="Materials and Finishes" />
          <PropRow name="Material">&lt;By Category&gt;</PropRow>
          <SectionRow title="Identity Data" />
          <PropRow name="Subcategory">Form</PropRow>
          <PropRow name="Solid/Void">Solid</PropRow>
        </tbody>
      </table>
      <div className="mt-auto flex h-[14px] items-start justify-between bg-[#efefef] pl-[2px] pt-px">
        <a href="#help" className="text-[#3a7cb5] underline">Properties help</a>
        <button disabled className="h-[10px] w-[38px] bg-[#f6f6f6] text-[#999]">Apply</button>
      </div>
    </section>
  );
}

type Node = { label: string; depth: 0 | 1 | 2; toggle?: '+' | '-'; icon?: string; bold?: boolean; selected?: boolean };

const tree: Node[] = [
  { label: 'Views (all)', depth: 0, toggle: '-', icon: 'views' },
  { label: 'Floor Plans', depth: 1, toggle: '-' },
  { label: 'Level 1', depth: 2, selected: true },
  { label: 'Level 2', depth: 2 },
  { label: 'Site', depth: 2 },
  { label: 'Ceiling Plans', depth: 1, toggle: '+' },
  { label: '3D Views', depth: 1, toggle: '-' },
  { label: '{3D}', depth: 2, bold: true },
  { label: 'Elevations (Building Elevation)', depth: 1, toggle: '-' },
  { label: 'East', depth: 2 },
  { label: 'North', depth: 2 },
  { label: 'South', depth: 2 },
  { label: 'West', depth: 2 },
  { label: 'Legends', depth: 0, icon: 'legend' },
  { label: 'Schedules/Quantities (all)', depth: 0, icon: 'schedule' },
  { label: 'Sheets (all)', depth: 0, icon: 'sheet' },
  { label: 'Families', depth: 0, toggle: '+', icon: 'families' },
  { label: 'Groups', depth: 0, toggle: '+', icon: 'groups' },
  { label: 'Revit Links', depth: 0, icon: 'link' },
];

function Toggle({ kind }: { kind?: '+' | '-' }) {
  return (
    <svg viewBox="0 0 10 10" className="size-[6px] shrink-0" fill="none" aria-hidden="true">
      {kind ? <rect x="1" y="1" width="8" height="8" fill="#fff" stroke="#aaa" /> : <path d="M2 5h8" stroke="#ccc" />}
      {kind && <path d={kind === '+' ? 'M3 5h4M5 3v4' : 'M3 5h4'} stroke="#555" strokeWidth="1.2" />}
    </svg>
  );
}

function Browser() {
  return (
    <section className="flex h-[299px] flex-col border-t border-[#d4d4d4] bg-white">
      <div className="flex h-[9px] items-center justify-between bg-[#efefef] px-[2px]">
        <h2>Project Browser - Project2</h2>
        <button aria-label="Close browser"><Cross /></button>
      </div>
      <ul className="grid h-[178px] auto-rows-fr">
        {tree.map((node) => (
          <li key={node.label} className={clsx('flex items-center', node.depth === 0 && 'pl-[2px]', node.depth === 1 && 'pl-3', node.depth === 2 && 'pl-[26px]')}>
            <Toggle kind={node.toggle} />
            {node.icon && <Icon name={node.icon} className="ml-[3px] size-2" />}
            <button className={clsx('px-px leading-2', node.icon ? 'ml-px' : node.depth === 1 && 'ml-1', node.bold && 'font-bold', node.selected && 'bg-[#dedede]')}>
              {node.label}
            </button>
          </li>
        ))}
      </ul>
    </section>
  );
}

function ViewCube() {
  return (
    <svg viewBox="0 0 72 60" className="absolute right-[10px] top-[23px] h-[60px] w-[72px]" aria-label="View cube">
      <ellipse cx="36" cy="37" rx="29" ry="15" fill="none" stroke="#d2d2d2" strokeWidth="8" />
      <ellipse cx="36" cy="37" rx="29" ry="15" fill="none" stroke="#f3f3f3" strokeWidth="6" />
      <path d="m6 48 7-4 5 3-7 4zM54 47l7 4 5-5-7-2zM16 23l4 1M53 23l6 3" fill="#e4e4e4" stroke="#cfcfcf" />
      <path d="m20 36 15 10 20-10-18-8z" fill="#b9b9b9" opacity=".7" />
      <path d="m36 5 17 8-19 8-15-9z" fill="#f4f4f4" stroke="#b5b5b5" strokeWidth=".8" />
      <path d="m19 12 15 9 1 22-14-9z" fill="#e7e7e7" stroke="#b5b5b5" strokeWidth=".8" />
      <path d="m53 13-19 8 1 22 17-10z" fill="#e0e0e0" stroke="#b5b5b5" strokeWidth=".8" />
      <text x="27" y="29" textAnchor="middle" transform="rotate(30 27 27)" className="fill-[#a0a0a0] text-[4px] font-bold">RIGHT</text>
      <text x="44" y="30" textAnchor="middle" transform="rotate(-20 44 28)" className="fill-[#a0a0a0] text-[4px] font-bold">BACK</text>
      <text x="36" y="15" textAnchor="middle" transform="rotate(160 36 13)" className="fill-[#a0a0a0] text-[4px] font-bold">TOP</text>
    </svg>
  );
}

function NavBar() {
  return (
    <div className="absolute right-px top-[86px] flex h-[56px] w-[17px] flex-col items-center justify-between rounded-[2px] border border-[#d2d2d2] bg-[#f3f3f3] py-px">
      <button aria-label="Close navigation bar" className="size-[4px] self-end rounded-full border border-[#aaa]" />
      <button aria-label="Steering wheel"><Icon name="wheel" className="size-[13px]" /></button>
      <Caret className="size-[3px]" />
      <span className="h-px w-full bg-[#ddd]" />
      <button aria-label="Zoom in region"><Icon name="zoomRegion" className="size-[9px]" /></button>
      <Caret className="size-[3px]" />
      <button aria-label="Customize" className="size-[4px] self-end rounded-full border border-[#aaa]" />
    </div>
  );
}

function Model() {
  return (
    <svg viewBox="165 97 1107 577" className="absolute inset-0 size-full" fill="none" aria-label="3D view">
      <path
        d="M272 98l30 17M327 130l33 19M385 164l81 47M491 226l32 18M712 355l82 48M819 417l32 19M876 450l77 45M739 98l55 32M819 145l32 18M876 178l77 44"
        stroke="#8a8a8a"
        strokeWidth=".8"
      />
      <path d="M539 257 699 342 506 426 346 341Z" fill="#c8e7fe" />
      <path d="M346 341 506 426 517 589 378 507Z" fill="#9098a6" />
      <path d="M699 342 678 518 517 589 506 426Z" fill="#bad0fd" />
      <path d="M558 248 615 223V405" stroke="#a9b4c4" strokeWidth=".6" />
      <path d="M615 405 552 431" stroke="#aabce6" strokeWidth=".6" />
      <path d="M612 223h7M612 405h7M549 260l18 10M657 323l33 17" stroke="#b9b3ad" strokeWidth=".6" />
      <path d="M539 257V437M539 437 506 451M539 437 678 518" stroke="#5b70a6" strokeWidth=".9" />
      <path d="M508 450 378 507" stroke="#2c3278" strokeWidth=".9" />
      <path d="M539 257 699 342 506 426 346 341ZM346 341 378 507 517 589 678 518 699 342M506 426 517 589" stroke="#1f3a78" strokeWidth="1" strokeLinejoin="round" />
      <text x="611" y="315" textAnchor="middle" transform="rotate(-90 611 313)" className="fill-[#24507e] text-[6px]">2848.1</text>
      <path d="M618 312v5M625 312v5M618 314h7" stroke="#24507e" strokeWidth=".9" />
      <path d="M306.500 213.500v7.500l2-1.500 1.200 2.500 1-.5-1.200-2.500h2z" fill="#fff" stroke="#333" strokeWidth=".7" />
    </svg>
  );
}

const viewTools = ['detail', 'style', 'sun', 'shadow', 'crop', 'glasses', 'reveal', 'analytic'];

function Viewport() {
  return (
    <main className="flex min-w-0 flex-1 flex-col">
      <div className="flex h-[10px] items-center bg-[#cbcbcb]">
        <button className="flex h-full w-[64px] items-center gap-1 bg-white px-[3px] font-bold">
          <Icon name="house" className="size-2" />
          {'{3D}'}
          <Cross className="ml-auto size-[5px]" />
        </button>
        <button className="flex items-center gap-[3px] pl-[3px] text-[#555]">
          <Icon name="plan" className="size-2" />
          Level 1
        </button>
        <button aria-label="Tab list" className="ml-auto mr-[2px]"><Caret className="size-[5px]" /></button>
      </div>
      <div className="flex flex-1">
        <div className="relative flex-1 bg-white">
          <Model />
          <ViewCube />
          <NavBar />
        </div>
        <div className="flex w-2 items-center justify-center bg-[#f0f0f0]">
          <span className="h-[7px] w-[2px] rounded-full bg-[#8a8a8a]" />
        </div>
      </div>
      <div className="flex h-[10px] items-center bg-[#f0f0f0] pb-px">
        <div className="flex w-[125px] items-center bg-[#f7f7f7] pl-3">
          <button className="mr-2 w-5 whitespace-nowrap">1 : 100</button>
          <div className="grid w-[84px] grid-cols-8">
            {viewTools.map((tool) => (
              <button key={tool} aria-label={tool} className="flex justify-center">
                <Icon name={tool} className="size-[9px]" />
              </button>
            ))}
          </div>
        </div>
        <div className="flex flex-1 justify-center">
          <span className="h-[2px] w-2 rounded-full bg-[#8a8a8a]" />
        </div>
        <div className="w-[10px]" />
      </div>
    </main>
  );
}

const selectTools = ['wrench', 'selLink', 'selPin', 'selFace', 'drag', 'gear', 'funnel'];

function StatusBar() {
  return (
    <footer className="flex h-3 items-center justify-between bg-[#cbcbcb] pl-px">
      <p>Click to select, TAB for alternates, CTRL adds, SHIFT unselects.</p>
      <div className="flex items-center pr-6">
        {selectTools.map((tool) => (
          <button key={tool} aria-label={tool} className="flex w-3 justify-center">
            <Icon name={tool} className="size-2" />
          </button>
        ))}
        <span>:1</span>
      </div>
    </footer>
  );
}

function TaskButton({ label, active, running, children }: { label: string; active?: boolean; running?: boolean; children: ReactNode }) {
  return (
    <button aria-label={label} className={clsx('relative flex h-5 w-[22px] items-center justify-center rounded-[2px]', active && 'bg-white/60')}>
      {children}
      {(active || running) && (
        <span className={clsx('absolute bottom-0 h-px rounded-full', active ? 'w-2 bg-[#0f6cbd]' : 'w-[3px] bg-[#777]')} />
      )}
    </button>
  );
}

function Taskbar() {
  return (
    <div className="grid h-6 grid-cols-[1fr_auto_1fr] items-center bg-linear-to-r from-[#ecf2f0] via-[#d9f8f7] via-30% to-[#e6f4f4]">
      <span />
      <div className="flex items-center">
        <TaskButton label="Start"><Icon name="windows" className="size-3" /></TaskButton>
        <label className="mx-[3px] flex h-[15px] w-[107px] items-center gap-[5px] rounded-full bg-white/80 px-[5px]">
          <Icon name="search" className="size-2" />
          <input type="text" placeholder="Search" aria-label="Search" className="w-16 bg-transparent text-[7px] outline-none placeholder:text-[#666]" />
        </label>
        <TaskButton label="Brave"><Icon name="brave" className="size-3" /></TaskButton>
        <TaskButton label="File Explorer" running><Icon name="folder" className="size-3" /></TaskButton>
        <TaskButton label="Everything"><Icon name="finder" className="size-3" /></TaskButton>
        <TaskButton label="Unreal"><Icon name="unreal" className="size-3" /></TaskButton>
        <TaskButton label="Revit" active><AppBadge letter="R" className="h-3 w-[11px] border-b-3 border-[#12398c] bg-[#1c62d6] text-[8px] leading-[9px]" /></TaskButton>
        <TaskButton label="3ds Max"><AppBadge letter="3" className="h-3 w-[11px] border-b-3 border-[#1b6577] bg-[#35a3b5] text-[8px] leading-[9px]" /></TaskButton>
        <TaskButton label="OBS" running><Icon name="obs" className="size-3" /></TaskButton>
        <TaskButton label="Outlook" running><Icon name="outlook" className="size-3" /></TaskButton>
      </div>
      <div className="flex items-center justify-end pr-[10px]">
        <svg viewBox="0 0 8 8" className="mr-[9px] size-[6px]" fill="none"><path d="m1 6 3-3 3 3" stroke="#333" /></svg>
        <Icon name="mic" className="mr-2 size-[9px]" />
        <p className="mr-[9px] text-center leading-2">ENG<br />US</p>
        <Icon name="wifi" className="mr-1 size-2" />
        <Icon name="volume" className="mr-2 size-2" />
        <p className="text-right leading-2">1:59 PM<br />22/1/2026</p>
      </div>
    </div>
  );
}

export default function App() {
  return (
    <div className="flex h-screen flex-col overflow-hidden bg-[#cbcbcb] font-[Roboto,'Open_Sans',sans-serif] text-[6px] leading-2 text-[#333]">
      <TitleBar />
      <TabRow />
      <Ribbon />
      <OptionsBar />
      <div className="flex min-h-0 flex-1 border-t border-[#bdbdbd]">
        <aside className="flex w-[165px] shrink-0 flex-col border-r-2 border-[#c6c6c6]">
          <Properties />
          <Browser />
        </aside>
        <Viewport />
      </div>
      <StatusBar />
      <Taskbar />
    </div>
  );
}
